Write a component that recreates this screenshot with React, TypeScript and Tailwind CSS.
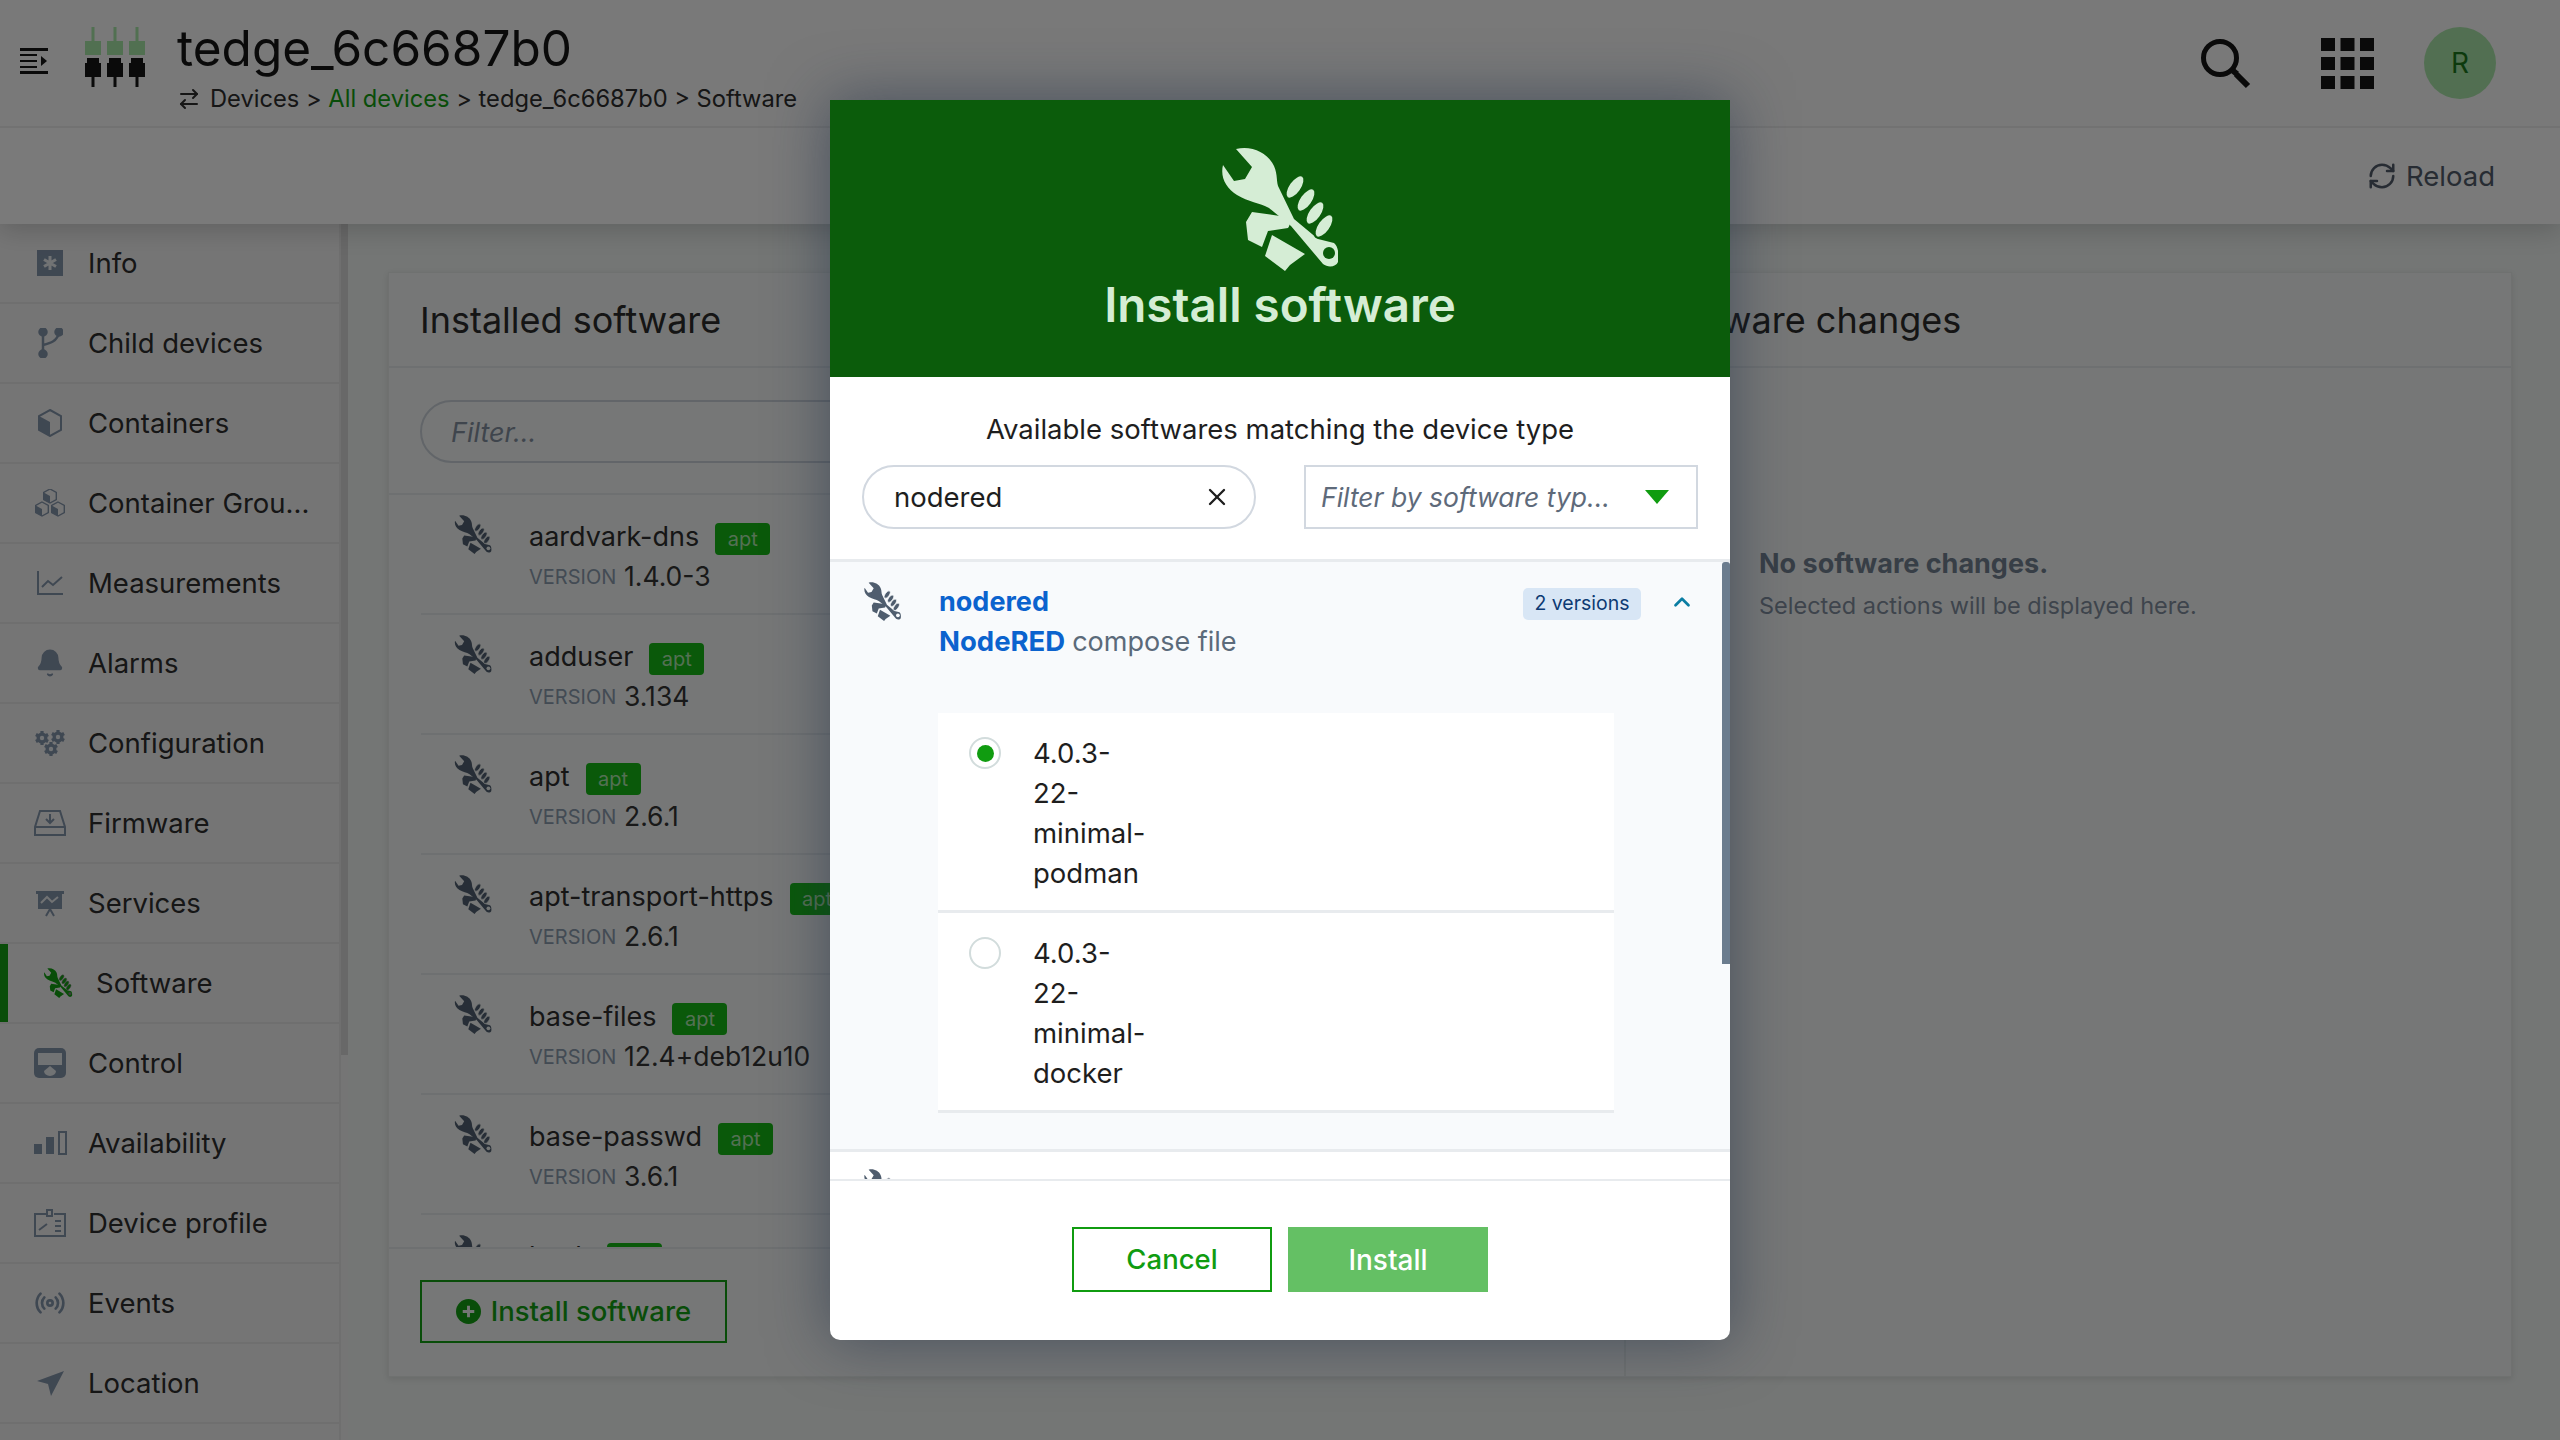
import React from "react";
import { ArrowRightLeft, Bell, ChevronUp, RefreshCw, Radio, X } from "lucide-react";

const font = { fontFamily: '"Inter", "Liberation Sans", sans-serif' };

function Tool({ className }: { className?: string }) {
  return (
    <svg viewBox="0 0 116 124" className={className} fill="currentColor">
      <path d="M14 2C30-2 46 6 52 19C56 28 54 36 57 41L72 72L96 92L112 96C117 100 117 110 116 115C114 120 106 121 101 117L69 79L47 61C38 56 26 55 15 48C4 41-2 30 1 18L12 34L23 32L30 20Z" />
      <circle cx="107" cy="106" r="6" fill="var(--hole, #fff)" />
      {[[73, 40], [84, 53], [93, 66], [102, 79]].map(([x, y]) => (
        <ellipse key={x} cx={x} cy={y} rx="6.5" ry="13.5" transform={`rotate(35 ${x} ${y})`} stroke="var(--hole, #fff)" strokeWidth="2" />
      ))}
      <path d="M30 65L58 69C66 70 70 76 66 81L46 84L40 100L26 93L24 75Z" />
      <path d="M50 88L83 107L68 118L63 124L43 109Z" />
    </svg>
  );
}

const ic = "w-[30px] h-[30px] text-[#7f90a5]";

function Cube({ x, y, s }: { x: number; y: number; s: number }) {
  return (
    <g transform={`translate(${x} ${y}) scale(${s})`}>
      <path d="M10 0L19 5V15L10 20L1 15V5Z" fill="none" stroke="currentColor" strokeWidth="2" />
      <path d="M10 10L1 5V15L10 20Z" fill="currentColor" />
    </g>
  );
}

function Gear({ x, y }: { x: number; y: number }) {
  return (
    <g transform={`translate(${x} ${y})`}>
      <circle r="4" fill="none" stroke="currentColor" strokeWidth="3" />
      {[0, 60, 120].map((a) => (
        <rect key={a} x="-1.6" y="-7" width="3.2" height="14" fill="currentColor" transform={`rotate(${a})`} />
      ))}
      <circle r="2.2" fill="#e3e6e8" />
    </g>
  );
}

const icons: Record<string, React.ReactNode> = {
  Info: (
    <svg viewBox="0 0 26 26" className="w-[26px] h-[26px] text-[#7f90a5]">
      <rect width="26" height="26" fill="currentColor" />
      <path d="M13 6v14M7 9.5l12 7M19 9.5l-12 7" stroke="#e3e6e8" strokeWidth="3" />
    </svg>
  ),
  "Child devices": (
    <svg viewBox="0 0 26 30" className="w-[26px] h-[30px] text-[#7f90a5]" fill="none" stroke="currentColor" strokeWidth="2.5">
      <circle cx="6" cy="4" r="3.5" fill="currentColor" />
      <circle cx="22" cy="4" r="3.5" fill="currentColor" />
      <circle cx="6" cy="26" r="3.5" fill="currentColor" />
      <path d="M6 6v18M6 17c8-2 14-4 16-12" />
    </svg>
  ),
  Containers: (
    <svg viewBox="0 0 24 28" className="w-[24px] h-[28px] text-[#7f90a5]">
      <path d="M12 1L23 7V21L12 27L1 21V7Z" fill="none" stroke="currentColor" strokeWidth="2" />
      <path d="M12 13L1 7V21L12 27Z" fill="currentColor" />
    </svg>
  ),
  "Container Grou...": (
    <svg viewBox="0 0 30 28" className="w-[30px] h-[28px] text-[#7f90a5]">
      <Cube x={8} y={0} s={0.7} />
      <Cube x={0} y={13} s={0.7} />
      <Cube x={16} y={13} s={0.7} />
    </svg>
  ),
  Measurements: (
    <svg viewBox="0 0 28 26" className="w-[28px] h-[26px] text-[#7f90a5]" fill="none" stroke="currentColor" strokeWidth="2">
      <path d="M2 1v23h25M6 17l6-6 5 4 9-8" />
    </svg>
  ),
  Alarms: <Bell className={ic} fill="currentColor" strokeWidth={1.5} />,
  Configuration: (
    <svg viewBox="0 0 30 26" className="w-[30px] h-[26px] text-[#7f90a5]">
      <Gear x={7} y={8} />
      <Gear x={23} y={7} />
      <Gear x={16} y={19} />
    </svg>
  ),
  Firmware: (
    <svg viewBox="0 0 32 26" className="w-[32px] h-[26px] text-[#7f90a5]" fill="none" stroke="currentColor" strokeWidth="2">
      <path d="M6 1h20l5 16v8H1v-8ZM1 17h30" />
      <path d="M16 4v8M12 9l4 4 4-4" />
    </svg>
  ),
  Services: (
    <svg viewBox="0 0 30 28" className="w-[30px] h-[28px] text-[#7f90a5]">
      <path d="M1 2h28v3h-2v15H3V5H1Z" fill="currentColor" />
      <path d="M6 14l6-6 5 5 6-5" fill="none" stroke="#e3e6e8" strokeWidth="2" />
      <path d="M11 27l4-7 4 7" fill="none" stroke="currentColor" strokeWidth="2" />
    </svg>
  ),
  Control: (
    <svg viewBox="0 0 32 30" className="w-[32px] h-[30px] text-[#7f90a5]">
      <rect width="32" height="30" rx="5" fill="currentColor" />
      <path d="M4 5h24v12H4z" fill="#e3e6e8" />
      <path d="M16 18l-6 5a6 5 0 0 0 12 0Z" fill="#e3e6e8" />
    </svg>
  ),
  Availability: (
    <svg viewBox="0 0 33 24" className="w-[33px] h-[24px] text-[#7f90a5]" fill="currentColor">
      <rect x="0" y="13" width="8" height="10" />
      <rect x="12" y="6" width="8" height="17" />
      <rect x="25" y="1" width="7" height="22" fill="none" stroke="currentColor" strokeWidth="2" />
    </svg>
  ),
  "Device profile": (
    <svg viewBox="0 0 32 28" className="w-[32px] h-[28px] text-[#7f90a5]" fill="none" stroke="currentColor" strokeWidth="2">
      <path d="M12 5H1v22h30V5h-11" />
      <rect x="13" y="1" width="5" height="6" />
      <path d="M5 21l8-6M21 12h6M21 17h6M21 22h6" />
    </svg>
  ),
  Events: <Radio className="w-[32px] h-[32px] text-[#7f90a5]" strokeWidth={2} />,
  Location: (
    <svg viewBox="0 0 27 25" className="w-[27px] h-[25px] text-[#7f90a5]" fill="currentColor">
      <path d="M0 10L27 0L14 25L11 13Z" />
    </svg>
  ),
};

const menu = ["Info", "Child devices", "Containers", "Container Grou...", "Measurements", "Alarms", "Configuration", "Firmware", "Services", "Software", "Control", "Availability", "Device profile", "Events", "Location"];

const pkgs = [
  ["aardvark-dns", "1.4.0-3"],
  ["adduser", "3.134"],
  ["apt", "2.6.1"],
  ["apt-transport-https", "2.6.1"],
  ["base-files", "12.4+deb12u10"],
  ["base-passwd", "3.6.1"],
  ["bash", "5.2.15"],
];

function Sidebar() {
  return (
    <aside className="w-[348px] h-[1216px] shrink-0 flex overflow-hidden bg-[#ebebeb]">
      <nav className="w-[341px] shrink-0 border-r-2 border-[#dedede] h-full">
        {menu.map((m) => (
          <div key={m} className={`relative h-[80px] flex items-center border-b-2 border-[#dedede] text-[27.5px] text-[#2c2c2c] ${m === "Software" ? "pl-[40px]" : "pl-[32px]"}`}>
            {m === "Software" && <div className="absolute left-0 top-0 bottom-0 w-[8px] bg-[#139a13]" />}
            <div className={`flex justify-center items-center w-[36px] mr-[20px] ${m === "Software" ? "text-[#129a12] [--hole:#767676]" : ""}`}>
              {m === "Software" ? <Tool className="w-[30px] h-[30px] shrink-0" /> : icons[m]}
            </div>
            <span className="whitespace-nowrap pt-[2px]">{m}</span>
          </div>
        ))}
      </nav>
      <div className="w-[7px] h-[831px] bg-[#d0d0d0]" />
    </aside>
  );
}

function Pkg({ name, ver }: { name: string; ver: string }) {
  return (
    <div className="h-[120px] shrink-0 ml-[32px] border-b-2 border-[#dde1e3] flex pt-[20px] pl-[33px]">
      <Tool className="w-[38px] h-[39px] text-[#4f5d6e] shrink-0 [--hole:#e8ecea]" />
      <div className="ml-[37px] pt-[2px]">
        <div className="flex items-center h-[40px]">
          <span className="text-[27px] text-[#2c2c2c] whitespace-nowrap">{name}</span>
          <span className="ml-[16px] mt-[4px] h-[32px] w-[55px] shrink-0 rounded-[4px] bg-[#14b214] text-[#a8e0a8] text-[20px] flex items-center justify-center">apt</span>
        </div>
        <div className="flex items-center h-[40px]">
          <span className="text-[20px] text-[#8696a8] w-[95px]">VERSION</span>
          <span className="text-[26.5px] text-[#333]">{ver}</span>
        </div>
      </div>
    </div>
  );
}

function Main() {
  return (
    <main className="flex-1 h-[1216px] pl-[40px] pr-[48px] pt-[48px] bg-[#e8ecea]">
      <div className="flex h-[1105px] bg-[#ecefee] border border-[#dfe2e1] shadow-[0_2px_6px_rgba(0,0,0,0.1)]">
        <section className="w-[1237px] shrink-0 flex flex-col border-r-2 border-[#dfe2e1] overflow-hidden">
          <h2 className="h-[95px] shrink-0 flex items-center pl-[31px] text-[36px] text-[#2a2a2a] border-b-2 border-[#dde1e3]">Installed software</h2>
          <div className="h-[127px] shrink-0 border-b-2 border-[#dde1e3] pt-[32px] pl-[31px] pr-[32px]">
            <div className="h-[63px] rounded-full border-[2px] border-[#c4cbd2] flex items-center pl-[29px] pt-[3px] text-[27px] italic text-[#7f8b9a]">Filter...</div>
          </div>
          <div className="h-[754px] shrink-0 overflow-hidden flex flex-col border-b-2 border-[#dde1e3]">
            {pkgs.map(([n, v]) => <Pkg key={n} name={n} ver={v} />)}
          </div>
          <div className="pl-[31px] pt-[31px]">
            <div className="w-[307px] h-[63px] border-[2px] border-[#139a13] flex items-center justify-center gap-[10px] text-[27.5px] font-medium text-[#139a13] whitespace-nowrap">
              <svg viewBox="0 0 26 26" className="w-[25px] h-[25px] shrink-0">
                <circle cx="13" cy="13" r="13" fill="currentColor" />
                <path d="M13 7v12M7 13h12" stroke="#e8ecea" strokeWidth="3" />
              </svg>
              Install software
            </div>
          </div>
        </section>
        <section className="flex-1 flex flex-col">
          <h2 className="h-[95px] shrink-0 flex items-center pl-[27px] text-[36px] text-[#2a2a2a] border-b-2 border-[#dde1e3] whitespace-nowrap">Software changes</h2>
          <div className="pl-[133px] pt-[176px]">
            <div className="text-[27px] font-bold text-[#6f7c8c] leading-[40px]">No software changes.</div>
            <div className="text-[23.5px] text-[#7d8999] leading-[40px] mt-[2px]">Selected actions will be displayed here.</div>
          </div>
        </section>
      </div>
    </main>
  );
}

function Radio2({ on }: { on?: boolean }) {
  return (
    <div className="w-[32px] h-[32px] rounded-full border-[2px] border-[#d2dcdc] flex items-center justify-center shrink-0">
      {on && <div className="w-[17px] h-[17px] rounded-full bg-[#109c10]" />}
    </div>
  );
}

function Version({ lines, on }: { lines: string[]; on?: boolean }) {
  return (
    <div className="h-[200px] border-b-[3px] border-[#e8ebee] flex pt-[24px] pl-[31px]">
      <Radio2 on={on} />
      <div className="ml-[32px] -mt-[4px] text-[27.5px] leading-[40px] text-[#1e1e1e]">
        {lines.map((l) => <div key={l}>{l}</div>)}
      </div>
    </div>
  );
}

function Modal() {
  return (
    <div className="absolute left-[830px] top-[100px] w-[900px] h-[1240px] bg-white rounded-b-[10px] flex flex-col overflow-hidden shadow-[0_0_60px_rgba(30,45,70,0.55)]">
      <header className="h-[277px] shrink-0 bg-[#0b5c0b] flex flex-col items-center pt-[47px] text-[#d5edd5] [--hole:#0b5c0b]">
        <Tool className="w-[116px] h-[124px]" />
        <div className="text-[47.5px] font-semibold leading-[60px] mt-[4px]">Install software</div>
      </header>
      <div className="h-[185px] shrink-0 border-b-[3px] border-[#e8ebee] px-[32px]">
        <div className="text-center text-[27.5px] leading-[40px] text-[#1e1e1e] pt-[32px]">Available softwares matching the device type</div>
        <div className="flex justify-between mt-[16px]">
          <div className="w-[394px] h-[64px] rounded-full border-[2px] border-[#d2d8e0] flex items-center justify-between pl-[30px] pr-[23px] text-[27.5px] text-[#1e1e1e]">
            <span className="pt-[2px]">nodered</span>
            <X className="w-[28px] h-[28px]" strokeWidth={2} />
          </div>
          <div className="w-[394px] h-[64px] border-[2px] border-[#d2d8e0] flex items-center justify-between pl-[15px] pr-[27px] text-[26.5px] italic text-[#5e6a7a] whitespace-nowrap">
            <span className="pt-[2px]">Filter by software typ...</span>
            <div className="w-0 h-0 border-x-[12px] border-x-transparent border-t-[14px] border-t-[#109c10]" />
          </div>
        </div>
      </div>
      <div className="relative h-[619px] shrink-0 overflow-hidden border-b-2 border-[#e8ebee]">
        <div className="h-[590px] bg-[#f8fafc] border-b-[3px] border-[#e8ebee] pl-[33px] pr-[35px] pt-[20px] flex">
          <Tool className="w-[39px] h-[39px] text-[#4f5d6e] shrink-0 [--hole:#f8fafc]" />
          <div className="ml-[37px] flex-1">
            <div className="flex items-center justify-between h-[40px]">
              <span className="text-[27px] font-bold text-[#0b63ce]">nodered</span>
              <div className="flex items-center">
                <span className="w-[118px] h-[32px] rounded-[5px] bg-[#d8e6f5] text-[#0d3a73] text-[19.5px] flex items-center justify-center mt-[3px]">2 versions</span>
                <ChevronUp className="w-[26px] h-[26px] ml-[28px] text-[#0a7da3]" strokeWidth={2.5} />
              </div>
            </div>
            <div className="h-[40px] flex items-center text-[27px] text-[#5b6a7a]">
              <span className="font-bold text-[#0b63ce] mr-[7px] text-[27.5px]">NodeRED</span> compose file
            </div>
            <div className="mt-[51px] -ml-[1px] w-[676px] bg-white">
              <Version on lines={["4.0.3-", "22-", "minimal-", "podman"]} />
              <Version lines={["4.0.3-", "22-", "minimal-", "docker"]} />
            </div>
          </div>
        </div>
        <div className="pl-[33px] pt-[17px]">
          <Tool className="w-[39px] h-[39px] text-[#4f5d6e] [--hole:#fff]" />
        </div>
        <div className="absolute right-0 top-0 w-[8px] h-[402px] rounded-t-[3px] bg-[#6b7c8e]" />
      </div>
      <footer className="flex-1 flex items-start justify-center gap-[16px] pt-[46px]">
        <div className="w-[200px] h-[65px] border-[2px] border-[#109c10] text-[#109c10] text-[27.5px] font-medium flex items-center justify-center">Cancel</div>
        <div className="w-[200px] h-[65px] bg-[#64c064] text-white text-[28px] font-medium flex items-center justify-center">Install</div>
      </footer>
    </div>
  );
}

export default function App() {
  return (
    <div className="relative w-[2560px] h-[1440px] overflow-hidden bg-[#e8ecea]" style={font}>
      <div className="relative z-10 shadow-[0_6px_24px_rgba(0,0,0,0.18)]">
        <div className="h-[128px] bg-[#f2f2f2] border-b-2 border-[#e5e5e5] flex items-center pl-[20px] pr-[64px]">
          <svg viewBox="0 0 28 26" className="w-[28px] h-[26px] mb-[4px] text-[#141414]" fill="currentColor">
            <path d="M0 0h28v3H0zM0 6h17v2H0zM0 12h17v2H0zM0 18h17v2H0zM0 23h28v3H0z" />
            <path d="M21 8l6 5-6 5Z" />
          </svg>
          <svg viewBox="0 0 60 60" className="w-[60px] h-[60px] ml-[37px] mb-[12px]">
            {[0, 22, 44].map((x) => (
              <g key={x}>
                <path d={`M${x + 6.5} 0h3v14h-3zM${x} 14h16v14H${x}z`} fill="#a3e0a3" />
                <path d={`M${x + 2} 31h12v5h2v14H${x}V36h2ZM${x + 6.5} 50h3v10h-3z`} fill="#141414" />
              </g>
            ))}
          </svg>
          <div className="ml-[32px] flex flex-col pt-[6px]">
            <div className="text-[49.5px] leading-[60px] text-[#141414] whitespace-nowrap">tedge_6c6687b0</div>
            <div className="flex items-center text-[23.7px] leading-[32px] text-[#2c2c2c] mt-[5px] whitespace-nowrap">
              <ArrowRightLeft className="w-[24px] h-[24px] mr-[9px]" strokeWidth={2} />
              Devices &gt;&nbsp;<span className="text-[#139a13]">All devices</span>&nbsp;&gt; tedge_6c6687b0 &gt; Software
            </div>
          </div>
          <div className="ml-auto flex items-center">
            <svg viewBox="0 0 51 51" className="w-[51px] h-[51px] text-[#141414]" fill="none" stroke="currentColor">
              <circle cx="20" cy="20" r="16.5" strokeWidth="5" />
              <path d="M32 32l5 4M36 36l12 12" strokeWidth="6" />
            </svg>
            <svg viewBox="0 0 53 51" className="w-[53px] h-[51px] ml-[70px] text-[#141414]" fill="currentColor">
              {[0, 19.5, 39].map((x) => [0, 19, 38].map((y) => <rect key={`${x}-${y}`} x={x} y={y} width="14" height="13" />))}
            </svg>
            <div className="w-[72px] h-[72px] ml-[50px] rounded-full bg-[#a4dfa4] text-[#1a751a] text-[28px] flex items-center justify-center">R</div>
          </div>
        </div>
        <div className="h-[96px] bg-[#f4f4f4] flex items-center justify-end pr-[65px] text-[27.5px] text-[#4e5866]">
          <RefreshCw className="w-[30px] h-[30px] mr-[9px]" strokeWidth={2} />
          <span className="pt-[2px]">Reload</span>
        </div>
      </div>
      <div className="flex">
        <Sidebar />
        <Main />
      </div>
      <div className="absolute inset-0 z-20 bg-black/50" />
      <div className="absolute inset-0 z-30">
        <Modal />
      </div>
    </div>
  );
}
